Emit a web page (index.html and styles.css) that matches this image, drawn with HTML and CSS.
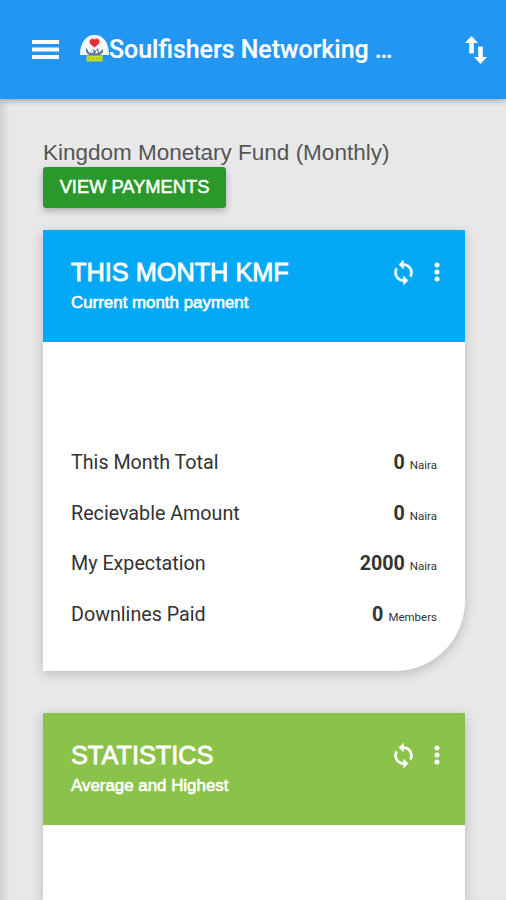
FILE: index.html
```html
<!DOCTYPE html>
<html lang="en">
<head>
<meta charset="utf-8">
<meta name="viewport" content="width=device-width, initial-scale=1">
<title>Soulfishers Networking</title>
<link rel="stylesheet" href="styles.css">
</head>
<body>
<header class="topbar">
  <svg class="menu" viewBox="0 0 27 20"><path d="M0 0h27v4H0zM0 7.500h27v4H0zM0 15h27v4H0z"/></svg>
  <svg class="logo" viewBox="0 0 29 28">
    <path d="M0 20C0 7 6 0 14.500 0S29 7 29 20z" fill="#f4fafe"/>
    <path d="M6 13c2 1 2 5 4 5l3-4 2 2 3-3 1 5 4-4c1 4-3 7-8.500 7S5 18 6 13z" fill="#526ba0"/>
    <path d="M10 7c0-3 3-4 4.500-2C16 3 20 4 19 7.500c-.5 2-3 3-4.500 4.500C13 10.500 10 9.500 10 7z" fill="#e52e36" stroke="#e52e36"/>
    <path d="M12 14l2 3-3 2zM17 14l1 4-3 1z" fill="#fff"/>
    <path d="M6.500 20.500h16v6h-16z" fill="#c4dd21"/>
    <path d="M9 22v3M13 22v3M17 22v3M20 22v3" stroke="#9abd28"/>
  </svg>
  <h1 class="brand">Soulfishers Networking …</h1>
  <svg class="swap" viewBox="0 0 22 28"><path d="M6.500 0 0 7h4.200v10.500h4.600V7H13zM15.500 28l6.500-7h-4.200V10.500h-4.600V21H9z"/></svg>
</header>
<main class="content">
  <h2 class="page-title">Kingdom Monetary Fund (Monthly)</h2>
  <button class="button">VIEW PAYMENTS</button>
  <section class="card card-month">
    <header class="card-header blue">
      <div><h3 class="card-title">THIS MONTH KMF</h3><p class="subtitle">Current month payment</p></div>
      <div class="actions">
        <svg class="sync" viewBox="2 1 20 22"><path d="M12 4V1L8 5l4 4V6c3.310 0 6 2.690 6 6 0 1.010-.25 1.970-.7 2.800l1.460 1.460A7.930 7.930 0 0 0 20 12c0-4.420-3.580-8-8-8zm0 14c-3.310 0-6-2.690-6-6 0-1.010.25-1.970.7-2.800L5.240 7.740A7.930 7.930 0 0 0 4 12c0 4.420 3.580 8 8 8v3l4-4-4-4z"/></svg>
        <svg class="more" viewBox="0 0 6 20"><circle cx="3" cy="3" r="2.500"/><circle cx="3" cy="10" r="2.500"/><circle cx="3" cy="17" r="2.500"/></svg>
      </div>
    </header>
    <ul class="facts">
      <li><span>This Month Total</span><span class="value"><b>0</b><small>Naira</small></span></li>
      <li><span>Recievable Amount</span><span class="value"><b>0</b><small>Naira</small></span></li>
      <li><span>My Expectation</span><span class="value"><b>2000</b><small>Naira</small></span></li>
      <li><span>Downlines Paid</span><span class="value"><b>0</b><small>Members</small></span></li>
    </ul>
  </section>
  <section class="card card-stats">
    <header class="card-header green">
      <div><h3 class="card-title">STATISTICS</h3><p class="subtitle">Average and Highest</p></div>
      <div class="actions">
        <svg class="sync" viewBox="2 1 20 22"><path d="M12 4V1L8 5l4 4V6c3.310 0 6 2.690 6 6 0 1.010-.25 1.970-.7 2.800l1.460 1.460A7.930 7.930 0 0 0 20 12c0-4.420-3.580-8-8-8zm0 14c-3.310 0-6-2.690-6-6 0-1.010.25-1.970.7-2.800L5.240 7.740A7.930 7.930 0 0 0 4 12c0 4.420 3.580 8 8 8v3l4-4-4-4z"/></svg>
        <svg class="more" viewBox="0 0 6 20"><circle cx="3" cy="3" r="2.500"/><circle cx="3" cy="10" r="2.500"/><circle cx="3" cy="17" r="2.500"/></svg>
      </div>
    </header>
  </section>
</main>
</body>
</html>
```
FILE: styles.css
```css
* { box-sizing: border-box; }
body { margin: 0; height: 900px; overflow: hidden; display: flex; flex-direction: column; background: #e8e8e8; font-family: Roboto, sans-serif; color: #333; }
h1, h2, h3, p, ul { margin: 0; padding: 0; }
svg { display: block; flex: none; fill: #fff; }
.topbar { height: 99px; flex: none; display: flex; align-items: center; padding: 0 19px 0 32px; background: #2196f3; box-shadow: 0 1px 7px rgba(0,0,0,.35); z-index: 1; }
.menu { width: 27px; height: 20px; }
.logo { width: 29px; height: 28px; margin-left: 21px; margin-top: -2px; }
.brand { font-size: 24.9px; font-weight: 500; line-height: 32px; color: #fff; white-space: nowrap; -webkit-text-stroke: .2px #fff; }
.swap { width: 22px; height: 28px; margin-left: auto; }
.content { flex: 1; min-height: 0; display: flex; flex-direction: column; padding: 40px 41px 0 43px; box-shadow: inset 8px 0 8px -5px rgba(0,0,0,.13); }
.page-title { height: 28px; font: 400 22.5px/28px "Liberation Sans", sans-serif; color: #555; white-space: nowrap; }
.button { display: block; flex: none; width: 183px; height: 41px; padding: 0 0 2px; border: 0; border-radius: 3px; background: #2b982b; color: #fff; font: 400 18.3px/39px "Liberation Sans", sans-serif; -webkit-text-stroke: .5px #fff; box-shadow: 0 3px 7px rgba(0,0,0,.25); white-space: nowrap; }
.card { background: #fff; box-shadow: 0 3px 12px rgba(0,0,0,.2); }
.card-month { flex: none; height: 441px; margin-top: 22px; border-radius: 0 0 70px 0; }
.card-stats { flex: 1; margin-top: 42px; }
.card-header { height: 112px; display: flex; justify-content: space-between; padding: 28px 25px 0 28px; color: #fff; font-family: "Liberation Sans", sans-serif; }
.blue { background: #03a9f4; }
.green { background: #8bc34a; }
.card-title { font-size: 25.3px; font-weight: 400; line-height: 29px; -webkit-text-stroke: .8px #fff; }
.subtitle { font-size: 16.9px; line-height: 20px; margin-top: 6px; -webkit-text-stroke: .6px #fff; }
.actions { display: flex; height: 28px; align-items: center; gap: 19px; }
.sync { width: 23px; height: 25px; stroke: #fff; stroke-width: .4px; }
.more { width: 6px; height: 20px; }
.facts { list-style: none; padding: 96px 28px 0; }
.facts li { height: 50.7px; display: flex; justify-content: space-between; align-items: baseline; font-size: 19.7px; line-height: 50px; white-space: nowrap; }
.value { display: flex; align-items: baseline; gap: 5px; }
.value b { font-weight: 700; }
.value small { font-size: 11.5px; }
```
